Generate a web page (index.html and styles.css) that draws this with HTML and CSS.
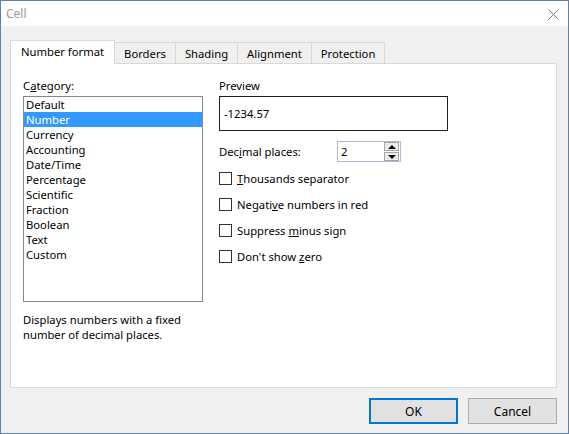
FILE: index.html
```html
<!DOCTYPE html>
<html lang="en">
<head>
    <meta charset="UTF-8">
    <title>Cell</title>
    <link rel="stylesheet" href="styles.css">
</head>
<body>
    <div class="window">
        <div class="titlebar">
            <span class="title">Cell</span>
            <svg class="close" width="11" height="11" viewBox="0 0 11 11">
                <path d="M0.5 0.5 L10.5 10.5 M10.5 0.5 L0.5 10.5" stroke="#7a7a7a" stroke-width="1" fill="none"/>
            </svg>
        </div>

        <div class="content">
            <div class="tabs">
                <div class="tab active">Number format</div>
                <div class="tab">Borders</div>
                <div class="tab">Shading</div>
                <div class="tab">Alignment</div>
                <div class="tab">Protection</div>
            </div>

            <div class="panel">
                <div class="col-left">
                    <div class="label">C<u>a</u>tegory:</div>
                    <ul class="list">
                        <li>Default</li>
                        <li class="selected">Number</li>
                        <li>Currency</li>
                        <li>Accounting</li>
                        <li>Date/Time</li>
                        <li>Percentage</li>
                        <li>Scientific</li>
                        <li>Fraction</li>
                        <li>Boolean</li>
                        <li>Text</li>
                        <li>Custom</li>
                    </ul>
                    <p class="desc">Displays numbers with a fixed<br>number of decimal places.</p>
                </div>

                <div class="col-right">
                    <div class="label">Preview</div>
                    <div class="preview">-1234.57</div>

                    <div class="decimals">
                        <span class="decimals-label">Dec<u>i</u>mal places:</span>
                        <div class="spin">
                            <span class="spin-value">2</span>
                            <div class="spin-btns">
                                <div class="spin-btn"><span class="arrow up"></span></div>
                                <div class="spin-btn"><span class="arrow down"></span></div>
                            </div>
                        </div>
                    </div>

                    <div class="checks">
                        <div class="check"><span class="box"></span><span><u>T</u>housands separator</span></div>
                        <div class="check"><span class="box"></span><span>Negati<u>v</u>e numbers in red</span></div>
                        <div class="check"><span class="box"></span><span>Suppress <u>m</u>inus sign</span></div>
                        <div class="check"><span class="box"></span><span>Don't show <u>z</u>ero</span></div>
                    </div>
                </div>
            </div>

            <div class="buttons">
                <button class="btn default">OK</button>
                <button class="btn">Cancel</button>
            </div>
        </div>
    </div>
</body>
</html>
```

FILE: styles.css
```css
body {
    margin: 0;
    font-family: 'Segoe UI', 'Noto Sans', sans-serif;
    font-size: 11.25px;
    color: #000;
}
.window {
    width: 569px;
    height: 434px;
    box-sizing: border-box;
    border: 1px solid #6082a8;
    background-color: #f0f0f0;
    display: flex;
    flex-direction: column;
}
.titlebar {
    height: 25px;
    flex-shrink: 0;
    background-color: #fff;
    display: flex;
    align-items: center;
    justify-content: space-between;
    padding: 0 9px 0 5px;
}
.title {
    color: #9a9a9a;
    font-size: 12px;
}
.close {
    display: block;
    margin-top: 1px;
}
.content {
    flex-grow: 1;
    display: flex;
    flex-direction: column;
    padding: 14px 11px 9px 9px;
}
.tabs {
    display: flex;
    align-items: flex-end;
    height: 23px;
    position: relative;
    z-index: 1;
}
.tab {
    height: 21px;
    box-sizing: border-box;
    border: 1px solid #d9d9d9;
    border-bottom: none;
    margin-left: -1px;
    padding: 0 9px;
    display: flex;
    align-items: center;
    background-color: #f0f0f0;
}
.tab.active {
    height: 24px;
    margin-left: 0;
    margin-bottom: -1px;
    padding: 0 10px 2px 10px;
    background-color: #fff;
}
.panel {
    height: 325px;
    box-sizing: border-box;
    border: 1px solid #d9d9d9;
    background-color: #fff;
    display: flex;
    gap: 16px;
    padding: 14px 0 0 12px;
}
.col-left {
    width: 180px;
}
.col-right {
    width: 229px;
}
.label {
    line-height: 15px;
    margin-bottom: 3px;
}
.list {
    list-style: none;
    margin: 0;
    padding: 0;
    height: 206px;
    box-sizing: border-box;
    border: 1px solid #828790;
}
.list li {
    line-height: 15px;
    height: 15px;
    padding-left: 2px;
}
.list li.selected {
    background-color: #3399ff;
    color: #fff;
}
.desc {
    margin: 10px 0 0 0;
    line-height: 15px;
}
.preview {
    height: 35px;
    box-sizing: border-box;
    border: 1px solid #1e1e1e;
    display: flex;
    align-items: center;
    padding-left: 4px;
}
.decimals {
    display: flex;
    align-items: center;
    margin-top: 10px;
}
.decimals-label {
    width: 118px;
}
.spin {
    width: 64px;
    height: 21px;
    box-sizing: border-box;
    border: 1px solid #a9bdd3;
    display: flex;
    align-items: center;
    justify-content: space-between;
    padding-left: 3px;
}
.spin-btns {
    width: 15px;
    height: 19px;
    display: flex;
    flex-direction: column;
    gap: 1px;
    padding: 0 1px 0 0;
}
.spin-btn {
    flex: 1;
    border: 1px solid #a6a6a6;
    background-color: #ececec;
    display: flex;
    align-items: center;
    justify-content: center;
}
.arrow {
    width: 0;
    height: 0;
    border-left: 4px solid transparent;
    border-right: 4px solid transparent;
}
.arrow.up {
    border-bottom: 4px solid #000;
}
.arrow.down {
    border-top: 4px solid #000;
}
.checks {
    margin-top: 3px;
}
.check {
    height: 26px;
    display: flex;
    align-items: center;
    gap: 5px;
}
.box {
    width: 13px;
    height: 13px;
    box-sizing: border-box;
    border: 1px solid #333;
    background-color: #fff;
}
.buttons {
    display: flex;
    justify-content: flex-end;
    gap: 10px;
    margin-top: 10px;
}
.btn {
    width: 89px;
    height: 26px;
    box-sizing: border-box;
    border: 1px solid #adadad;
    background-color: #e1e1e1;
    font-family: inherit;
    font-size: 12px;
    color: #000;
    padding: 0;
}
.btn.default {
    border: 2px solid #0078d7;
}
```
